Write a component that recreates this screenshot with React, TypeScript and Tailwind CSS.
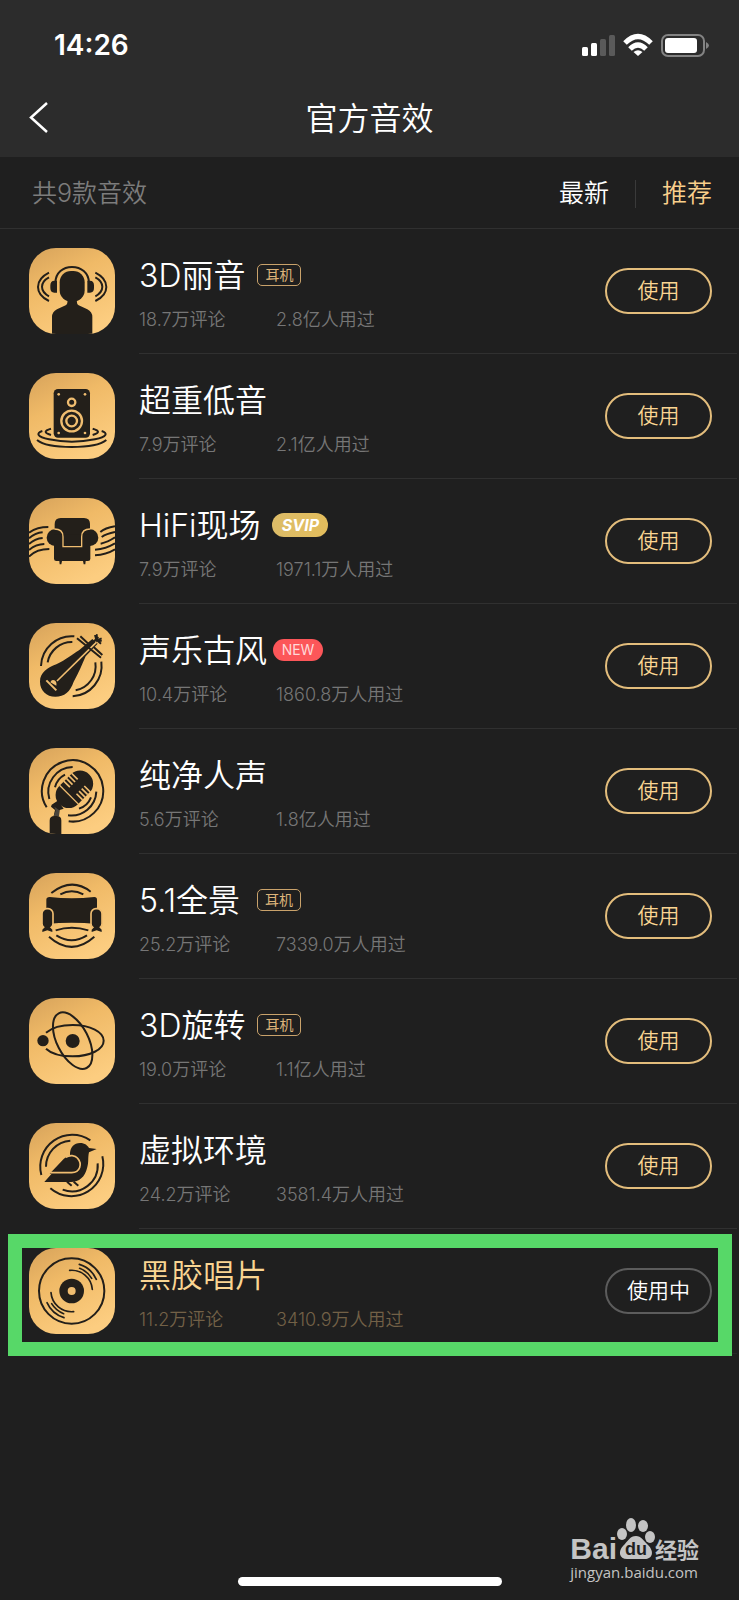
import React from 'react';
import clsx from 'clsx';

type Badge = 'headphone' | 'svip' | 'new';

interface Effect {
  name: string;
  comments: string;
  users: string;
  icon: React.ReactNode;
  badge?: Badge;
  active?: boolean;
}

const DARK = '#231f1a';
const GOLD = '#f0bd70';

// All artwork is drawn on a 258 x 258 board
const HeadphoneArt = () => (
  <>
    <rect x="92" y="69" width="75" height="92" rx="34" fill={DARK} />
    <path d="M69 258V207Q69 192 84 184L110 172Q117 168 115 156H144Q142 168 149 172L175 184Q190 192 190 207V258Z" fill={DARK} />
    <path d="M79 104C80 74 102 57 129 57S179 74 180 104" fill="none" stroke={DARK} strokeWidth="6" />
    <path d="M84 98V134H76Q64 134 64 120V112Q64 98 76 98ZM175 98V134H183Q195 134 195 120V112Q195 98 183 98Z" fill={DARK} />
    <g fill="none" stroke={DARK} strokeWidth="6">
      <path d="M60 74C16 96 16 138 60 159M60 88C32 103 32 130 60 145" />
      <path d="M199 74C243 96 243 138 199 159M199 88C227 103 227 130 199 145" />
    </g>
  </>
);

const SpeakerArt = () => (
  <>
    <rect x="74" y="48" width="109" height="146" rx="13" fill={DARK} />
    <g fill={GOLD}>
      <circle cx="89" cy="64" r="4" />
      <circle cx="168" cy="64" r="4" />
      <circle cx="89" cy="180" r="4" />
      <circle cx="168" cy="180" r="4" />
    </g>
    <g fill="none" stroke={GOLD} strokeWidth="7">
      <circle cx="128" cy="88" r="11" />
      <circle cx="128" cy="144" r="31" />
      <circle cx="128" cy="144" r="16" />
    </g>
    <g fill="none" stroke={DARK} strokeWidth="6">
      <path d="M66 167Q34 176 66 186M191 167Q223 176 191 186" />
      <path d="M40 174C20 180 24 192 60 199Q128 213 198 199C234 192 238 180 218 174" />
      <path d="M24 201Q50 222 128 222Q206 222 232 201" />
    </g>
  </>
);

const ArmchairArt = () => (
  <>
    <path d="M77 119V78Q77 60 95 60H165Q183 60 183 78V119Z" fill={DARK} />
    <circle cx="78" cy="119" r="25" fill={DARK} />
    <circle cx="183" cy="119" r="25" fill={DARK} />
    <path d="M75 110H184V182Q184 189 177 189H82Q75 189 75 182Z" fill={DARK} />
    <path d="M91 189h8l-2 10h-5zM162 189h8l-1 10h-5z" fill={DARK} />
    <path d="M76 93C94 93 102 102 102 116V146H158V116C158 102 166 93 184 93" fill="none" stroke={GOLD} strokeWidth="4" />
    <g fill="none" stroke={DARK} strokeWidth="6">
      <path d="M0 104Q24 87 58 87M0 121Q18 105 41 103M0 138Q18 122 41 120M0 156Q20 139 46 138M0 176Q22 153 61 153" />
      <path d="M214 102Q228 90 258 85M218 117Q232 107 258 102M215 137Q236 133 258 118M198 155Q232 152 258 136M198 172Q232 170 258 154" />
    </g>
  </>
);

const PipaArt = () => (
  <>
    <path d="M36 129A92 92 0 0 1 136 40M56 118A74 74 0 0 1 130 57M217 116A92 92 0 0 1 131 220M199 118A74 74 0 0 1 140 202" fill="none" stroke={DARK} strokeWidth="6" />
    <path d="M33 176C33 148 56 134 82 124C112 110 130 94 150 82L190 48L206 62L170 100C160 122 150 148 134 176C124 206 106 221 79 221C52 221 33 202 33 176Z" fill={DARK} />
    <path d="M84 174L202 58" stroke={GOLD} strokeWidth="5" />
    <path d="M64 178Q68 168 76 172Q84 176 82 188Z" fill={GOLD} />
    <path d="M52 172L82 202" stroke={GOLD} strokeWidth="6" />
    <path d="M190 60L208 42M198 36L202 50L218 54M204 34L200 52M216 62L202 50M218 46L200 54M144 46L216 104M154 40L182 66M194 72L220 96" fill="none" stroke={DARK} strokeWidth="6" />
  </>
);

const MicArt = () => (
  <>
    <g fill="none" stroke={DARK} strokeWidth="6">
      <path d="M53 178A92 92 0 1 1 119 220" />
      <path d="M61 153A75 75 0 0 1 131 57M78 118A58 58 0 0 1 108 80" />
      <path d="M202 131A75 75 0 0 1 117 202M186 148A58 58 0 0 1 150 182" />
    </g>
    <g transform="translate(134 126) rotate(45)">
      <rect x="-39" y="-66" width="78" height="126" rx="38" fill={DARK} />
      <path d="M-40 20H40" stroke={GOLD} strokeWidth="4" />
      <path d="M-40 -31H-14M-40 -20H-14M-40 -9H-14M-40 2H-14M14 -31H40M14 -20H40M14 -9H40M14 2H40" stroke={GOLD} strokeWidth="5" />
    </g>
    <path d="M68 170L86 158L104 182L92 186L90 204H74L78 186L66 176Z" fill={DARK} />
    <path d="M76 176L90 186V204H74L80 188Z" fill="#4a453d" />
    <path d="M62 258V218Q62 204 76 204H84Q97 204 97 218V258Z" fill={DARK} />
  </>
);

const SofaArt = () => (
  <>
    <path d="M52 80Q52 72 62 72Q128 80 196 72Q204 72 204 80V153Q128 146 52 153Z" fill={DARK} />
    <rect x="39" y="107" width="33" height="60" rx="15" fill={DARK} stroke={GOLD} strokeWidth="5" />
    <rect x="186" y="107" width="33" height="60" rx="15" fill={DARK} stroke={GOLD} strokeWidth="5" />
    <path d="M40 177V170L50 160H60L70 170V177L55 172ZM188 177V170L198 160H208L218 170V177L203 172Z" fill={DARK} />
    <g fill="none" stroke={DARK} strokeWidth="6">
      <path d="M67 60Q128 12 185 56M94 64Q128 46 163 64" />
      <path d="M80 172Q128 157 178 172M82 187Q128 216 174 187M60 191Q128 252 196 191" />
    </g>
  </>
);

const AtomArt = () => (
  <>
    <circle cx="131" cy="129" r="21" fill={DARK} />
    <circle cx="42" cy="128" r="17" fill={DARK} />
    <g fill="none" stroke={DARK} strokeWidth="6">
      <path d="M51 104C70 88 98 81 131 81C184 81 224 102 224 128S184 175 131 175C98 175 68 168 51 152" />
      <ellipse cx="131" cy="128" rx="47" ry="92" transform="rotate(-27 131 128)" />
    </g>
  </>
);

const BirdArt = () => (
  <>
    <g fill="none" stroke={DARK} strokeWidth="6">
      <path d="M37 156A96 96 0 0 1 184 52M51 131A78 78 0 0 1 124 53" />
      <path d="M220 100A96 96 0 0 1 64 196M206 121A78 78 0 0 1 101 200" />
    </g>
    <path d="M123 96C122 72 136 60 153 60C168 60 176 68 180 75L203 78L180 88C176 104 180 118 174 136C168 162 150 177 126 177H46L68 152H62L104 108Q112 100 123 96Z" fill={DARK} />
    <path d="M64 149H128C154 149 160 122 146 106C138 96 122 95 110 103" fill="none" stroke={GOLD} strokeWidth="5" />
    <path d="M114 176L128 188M134 176L148 188" stroke={DARK} strokeWidth="6" />
  </>
);

const VinylArt = () => (
  <>
    <circle cx="128" cy="129" r="98" fill="none" stroke={DARK} strokeWidth="6" />
    <g fill="none" stroke={DARK} strokeWidth="5" strokeLinecap="round">
      <path d="M122 67A62 62 0 0 1 190 124M151 49A82 82 0 0 1 202 94M152 61A72 72 0 0 1 188 91" />
      <path d="M134 191A62 62 0 0 1 66 134M105 209A82 82 0 0 1 54 164M104 197A72 72 0 0 1 68 167" />
    </g>
    <circle cx="128" cy="129" r="37" fill={DARK} />
    <circle cx="128" cy="129" r="12" fill={GOLD} />
  </>
);

const effects: Effect[] = [
  { name: '3D丽音', comments: '18.7万评论', users: '2.8亿人用过', icon: <HeadphoneArt />, badge: 'headphone' },
  { name: '超重低音', comments: '7.9万评论', users: '2.1亿人用过', icon: <SpeakerArt /> },
  { name: 'HiFi现场', comments: '7.9万评论', users: '1971.1万人用过', icon: <ArmchairArt />, badge: 'svip' },
  { name: '声乐古风', comments: '10.4万评论', users: '1860.8万人用过', icon: <PipaArt />, badge: 'new' },
  { name: '纯净人声', comments: '5.6万评论', users: '1.8亿人用过', icon: <MicArt /> },
  { name: '5.1全景', comments: '25.2万评论', users: '7339.0万人用过', icon: <SofaArt />, badge: 'headphone' },
  { name: '3D旋转', comments: '19.0万评论', users: '1.1亿人用过', icon: <AtomArt />, badge: 'headphone' },
  { name: '虚拟环境', comments: '24.2万评论', users: '3581.4万人用过', icon: <BirdArt /> },
  { name: '黑胶唱片', comments: '11.2万评论', users: '3410.9万人用过', icon: <VinylArt />, active: true },
];

const BadgeTag: React.FC<{ type: Badge }> = ({ type }) => {
  if (type === 'svip') {
    return (
      <span className="ml-3 flex h-6 w-14 items-center justify-center rounded-full bg-linear-to-r from-[#dcbc68] to-[#e3bd5c] text-base leading-none font-bold text-white italic">
        SVIP
      </span>
    );
  }
  if (type === 'new') {
    return (
      <span className="ml-1.5 flex h-[22px] w-[50px] items-center justify-center rounded-full bg-[#fc5659] text-sm leading-none text-[#ffd9d9]">
        NEW
      </span>
    );
  }
  return (
    <span className="ml-3 flex h-[22px] w-11 items-center justify-center rounded-[5px] border border-[#c9a26b] text-sm leading-none text-[#dcb47a]">
      耳机
    </span>
  );
};

const EffectRow: React.FC<{ effect: Effect; id: string }> = ({ effect, id }) => (
  <li className="relative flex h-[125px] pl-[29px]">
    <svg viewBox="0 0 258 258" className="mt-[19px] size-[86px] shrink-0 rounded-[27px]" aria-hidden="true">
      <defs>
        <linearGradient id={id} x1="0.1" y1="0" x2="0.6" y2="1">
          <stop offset="0" stopColor="#d9a55c" />
          <stop offset="0.4" stopColor="#f0ba67" />
          <stop offset="1" stopColor="#fccd80" />
        </linearGradient>
      </defs>
      <rect width="258" height="258" fill={`url(#${id})`} />
      {effect.icon}
    </svg>
    <div
      className={clsx(
        'mr-0.5 ml-6 flex flex-1 items-start border-b pr-[25px]',
        effect.active ? 'border-[#282828]' : 'border-[#303030]',
      )}
    >
      <div className="flex-1 pt-6">
        <div className="flex h-11 items-center">
          <h2
            className={clsx(
              'min-w-[106px] pt-0.5 text-[32px] leading-[44px] font-[350]',
              effect.active ? 'text-[#fad592]' : 'text-white',
            )}
          >
            {effect.name}
          </h2>
          {effect.badge && <BadgeTag type={effect.badge} />}
        </div>
        <p className={clsx('mt-[9px] flex text-lg leading-7 font-[350]', effect.active ? 'text-[#736147]' : 'text-[#767676]')}>
          <span className="w-[137px]">{effect.comments}</span>
          <span>{effect.users}</span>
        </p>
      </div>
      <button
        type="button"
        className={clsx(
          'mt-[39px] flex h-[46px] w-[107px] items-center justify-center rounded-full border-2 pb-0.5 text-[21px] leading-none font-[350]',
          effect.active ? 'border-[#5c5c5c] text-white' : 'border-[#e3bd7c] text-[#fad592]',
        )}
      >
        {effect.active ? '使用中' : '使用'}
      </button>
    </div>
    {effect.active && (
      <div className="pointer-events-none absolute top-[5px] right-[7px] -bottom-0.5 left-2 border-14 border-[#57d868]" />
    )}
  </li>
);

const StatusIcons = () => (
  <svg viewBox="0 0 128 24" className="h-6 w-32" aria-hidden="true">
    <g fill="#fff">
      <rect x="1" y="14" width="6" height="9" rx="1.5" />
      <rect x="10" y="10" width="6" height="13" rx="1.5" />
      <rect x="19" y="6" width="6" height="17" rx="1.5" opacity="0.22" />
      <rect x="28" y="2" width="6" height="21" rx="1.5" opacity="0.22" />
    </g>
    <g fill="none" stroke="#fff" strokeWidth="5">
      <path d="M44 10Q57 -3 70 10" />
      <path d="M49 16Q57 8 65 16" />
    </g>
    <path d="M52.500 19Q57 15.500 61.500 19L57 23Z" fill="#fff" />
    <rect x="81" y="2" width="42" height="21" rx="6" fill="none" stroke="#838383" strokeWidth="2" />
    <rect x="84" y="5" width="32" height="15" rx="3" fill="#fff" />
    <path d="M125 9Q131 12.500 125 16Z" fill="#838383" />
  </svg>
);

const Watermark = () => (
  <div className="absolute right-10 bottom-4 font-['Open_Sans',sans-serif] text-[#c4c4c4]">
    <div className="flex h-11 items-end">
      <span className="font-['Liberation_Sans',sans-serif] text-[30px] leading-[22px] font-bold">Bai</span>
      <svg viewBox="0 0 38 42" className="h-[42px] w-[38px] shrink-0" aria-hidden="true">
        <g fill="#c4c4c4">
          <ellipse cx="5" cy="16" rx="5" ry="6" />
          <ellipse cx="14" cy="7" rx="5" ry="7" />
          <ellipse cx="26" cy="8" rx="5" ry="6" />
          <ellipse cx="33" cy="19" rx="5" ry="6" />
          <path d="M19 18C24 18 27 23 31 27C38 34 35 41 28 41H10C2 41 1 33 6 28C11 23 13 18 19 18Z" />
        </g>
        <text x="19" y="37" textAnchor="middle" fontFamily="Liberation Sans, sans-serif" fontSize="18" fontWeight="700" fill="#1f1f1f">
          du
        </text>
      </svg>
      <span className="font-['Noto_Sans_CJK_SC',sans-serif] text-[22px] leading-6 font-bold">经验</span>
    </div>
    <div className="text-[15px] leading-6 font-medium">jingyan.baidu.com</div>
  </div>
);

const App: React.FC = () => (
  <div className="relative flex min-h-screen flex-col bg-[#1f1f1f] font-['Inter','Noto_Sans_CJK_SC',sans-serif]">
    <header className="bg-[#2c2c2c]">
      <div className="flex h-[78px] items-center justify-between pt-3 pr-[30px] pl-[54px]">
        <time className="text-[28px] leading-8 font-semibold text-white">14:26</time>
        <StatusIcons />
      </div>
      <div className="grid h-[79px] grid-cols-[80px_1fr_80px] items-center">
        <button type="button" aria-label="返回" className="flex h-full items-center pl-7">
          <svg viewBox="0 0 22 34" className="h-[34px] w-[22px]" fill="none" stroke="#fff" strokeWidth="2.500" aria-hidden="true">
            <path d="M19 2L3 16.500L19 31" />
          </svg>
        </button>
        <h1 className="pt-0.5 text-center text-[32px] leading-10 font-[350] text-white">官方音效</h1>
      </div>
    </header>

    <main>
      <div className="flex h-[72px] items-center border-b border-[#303030] pt-0.5 pr-[27px] pl-8 text-[25px] font-[350]">
        <p className="flex-1 text-[#7c7c7c]">共9款音效</p>
        <button type="button" className="text-white">最新</button>
        <span className="mx-[26px] h-7 w-px bg-[#3a3a3a]" />
        <button type="button" className="text-[#fad08c]">推荐</button>
      </div>
      <ul>
        {effects.map((effect, i) => (
          <EffectRow key={effect.name} effect={effect} id={`tile-${i}`} />
        ))}
      </ul>
    </main>

    <footer className="mt-auto flex justify-center pb-3.5">
      <div className="h-[9px] w-[264px] rounded-full bg-white" />
    </footer>
    <Watermark />
  </div>
);

export default App;
